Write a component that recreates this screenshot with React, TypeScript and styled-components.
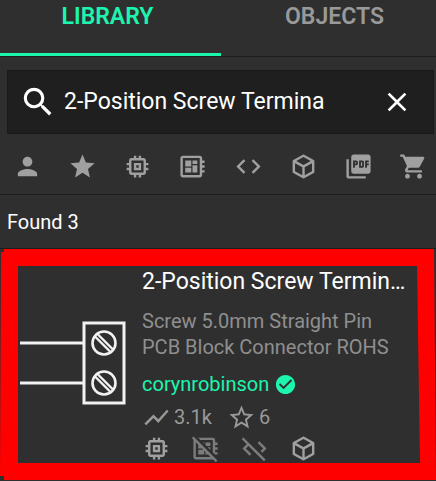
import React from "react";
import styled, { createGlobalStyle } from "styled-components";
import {
  MdPerson, MdStar, MdMemory, MdDeveloperBoard, MdCode, MdPictureAsPdf, MdShoppingCart,
  MdSearch, MdClose, MdShowChart, MdStarBorder, MdCheckCircle, MdDeveloperBoardOff, MdCodeOff,
} from "react-icons/md";

const GlobalStyle = createGlobalStyle`
  * { box-sizing: border-box; }
  body { margin: 0; background: #2f2f2f; font-family: Roboto, "Liberation Sans", sans-serif; overflow: hidden; }
  button { font: inherit; border: 0; padding: 0; background: none; cursor: pointer; }
  svg { display: block; flex: none; }
`;

const Panel = styled.main`
  overflow: hidden;
  color: #fff;
  background: #2f2f2f;
`;

const Tabs = styled.nav`
  display: grid;
  grid-template-columns: 1fr 1fr;
  width: calc(100% + 6px);
  height: 57px;
  border-bottom: 1px solid #1c1c1c;
`;

const Tab = styled.button<{ $active?: boolean }>`
  padding: ${(p) => (p.$active ? "0 6px 20px 0" : "0 0 20px 6px")};
  border-bottom: 3px solid ${(p) => (p.$active ? "#1cf5ae" : "transparent")};
  color: ${(p) => (p.$active ? "#1cf5ae" : "#999")};
  font-size: 23px;
  font-weight: 600;
  line-height: 32px;
`;

const SearchBox = styled.label`
  display: flex;
  align-items: center;
  height: 64px;
  margin: 13px 2px 0 7px;
  padding: 0 20px 0 11px;
  background: #1e1f1e;
  border: 1px solid #191a19;
`;

const SearchInput = styled.input`
  flex: 1;
  min-width: 0;
  margin-left: 7px;
  padding: 0;
  border: 0;
  outline: 0;
  background: none;
  color: #fff;
  font: 23px/32px Roboto, "Liberation Sans", sans-serif;
`;

const IconButton = styled.button`
  display: flex;
  color: #fff;
`;

const Filters = styled.div`
  display: grid;
  grid-template-columns: repeat(8, 1fr);
  width: calc(100% + 5px);
  height: 61px;
  padding-top: 6px;
  border-bottom: 1px solid #1c1c1c;
`;

const Filter = styled.button`
  display: flex;
  align-items: center;
  justify-content: center;
  color: #a0a0a0;
  padding-bottom: 1px;
`;

const Found = styled.p`
  height: 54px;
  margin: 0;
  padding-left: 7px;
  border-bottom: 1px solid #1c1c1c;
  font-size: 20px;
  line-height: 54px;
`;

const Card = styled.article`
  position: relative;
  display: flex;
  height: 232px;
  padding: 17px 20px 0 20px;
`;

const Thumb = styled.div`
  flex: none;
  width: 122px;
  padding-top: 55px;
`;

const Details = styled.div`
  flex: 1;
  min-width: 0;
`;

const Title = styled.h2`
  margin: 0;
  font-size: 23px;
  font-weight: 400;
  line-height: 32px;
  white-space: nowrap;
`;

const Description = styled.p`
  max-width: 264px;
  margin: 10px 0 0;
  color: #8f8f8f;
  font-size: 20px;
  line-height: 26px;
`;

const Author = styled.a`
  display: flex;
  align-items: center;
  gap: 5px;
  margin-top: 11px;
  color: #1cf5ae;
  font-size: 20px;
  line-height: 26px;
  text-decoration: none;
`;

const Stats = styled.div`
  display: flex;
  align-items: center;
  gap: 15px;
  height: 32px;
  margin-top: 4px;
  color: #999;
  font-size: 20px;
`;

const Stat = styled.span`
  display: flex;
  align-items: center;
  gap: 3px;
`;

const Assets = styled.div`
  display: flex;
  align-items: center;
  gap: 20px;
  height: 31px;
`;

const Asset = styled.span<{ $off?: boolean }>`
  color: ${(p) => (p.$off ? "#7c7c7c" : "#a0a0a0")};
`;

const Frame = styled.svg`
  position: absolute;
  inset: 0;
  width: 100%;
  height: 100%;
  pointer-events: none;
`;

const CubeIcon = ({ size }: { size: number }) => (
  <svg width={size} height={size} viewBox="0 0 24 24" fill="currentColor" aria-hidden="true">
    <path d="M21,16.5C21,16.88 20.79,17.21 20.47,17.38L12.57,21.82C12.41,21.94 12.21,22 12,22C11.79,22 11.59,21.94 11.43,21.82L3.53,17.38C3.21,17.21 3,16.88 3,16.5V7.5C3,7.12 3.21,6.79 3.53,6.62L11.43,2.18C11.59,2.06 11.79,2 12,2C12.21,2 12.41,2.06 12.57,2.18L20.47,6.62C20.79,6.79 21,7.12 21,7.5V16.5M12,4.15L6.04,7.5L12,10.85L17.96,7.5L12,4.15M5,15.91L11,19.29V12.58L5,9.21V15.91M19,15.91V9.21L13,12.58V19.29L19,15.91Z" />
  </svg>
);

const TerminalSymbol = () => (
  <svg width="106" height="84" viewBox="0 0 106 84" fill="none" stroke="#f2f2f2" strokeWidth="3" role="img" aria-label="Screw terminal schematic">
    <rect x="64" y="2" width="40" height="80" />
    {[22, 62].map((y) => (
      <g key={y}>
        <path d={`M0 ${y}H63`} />
        <circle cx="84" cy={y} r="11.5" strokeWidth="2.6" />
        <path d={`M77.5 ${y - 9}L93 ${y + 6.5}M75 ${y - 6.5}L90.5 ${y + 9}`} strokeWidth="2.4" />
      </g>
    ))}
  </svg>
);

const filters = [
  { label: "My parts", icon: <MdPerson size={29} /> },
  { label: "Favorites", icon: <MdStar size={29} /> },
  { label: "Has symbol", icon: <MdMemory size={29} /> },
  { label: "Has footprint", icon: <MdDeveloperBoard size={29} /> },
  { label: "Has code", icon: <MdCode size={29} /> },
  { label: "Has 3D model", icon: <CubeIcon size={29} /> },
  { label: "Has datasheet", icon: <MdPictureAsPdf size={29} /> },
  { label: "Purchasable", icon: <MdShoppingCart size={29} /> },
];

export default function App() {
  return (
    <Panel>
      <GlobalStyle />
      <Tabs>
        <Tab $active>LIBRARY</Tab>
        <Tab>OBJECTS</Tab>
      </Tabs>
      <SearchBox>
        <MdSearch size={38} />
        <SearchInput aria-label="Search library" defaultValue="2-Position Screw Termina" />
        <IconButton aria-label="Clear search"><MdClose size={32} /></IconButton>
      </SearchBox>
      <Filters>
        {filters.map((f) => (
          <Filter key={f.label} aria-label={f.label}>{f.icon}</Filter>
        ))}
      </Filters>
      <Found>Found 3</Found>
      <Card>
        <Thumb><TerminalSymbol /></Thumb>
        <Details>
          <Title>2-Position Screw Termin…</Title>
          <Description>Screw 5.0mm Straight Pin PCB Block Connector ROHS</Description>
          <Author href="#corynrobinson">corynrobinson <MdCheckCircle size={23} /></Author>
          <Stats>
            <Stat><MdShowChart size={29} />3.1k</Stat>
            <Stat><MdStarBorder size={29} />6</Stat>
          </Stats>
          <Assets>
            <Asset><MdMemory size={29} /></Asset>
            <Asset $off><MdDeveloperBoardOff size={29} /></Asset>
            <Asset $off><MdCodeOff size={29} /></Asset>
            <Asset><CubeIcon size={29} /></Asset>
          </Assets>
        </Details>
        <Frame viewBox="0 0 436 232" preserveAspectRatio="none" aria-hidden="true">
          <path fill="#f00" fillRule="evenodd" d="M4 0H434L436 231H4V227H0L1 3H4ZM18 17V214H420L417 17Z" />
        </Frame>
      </Card>
    </Panel>
  );
}
